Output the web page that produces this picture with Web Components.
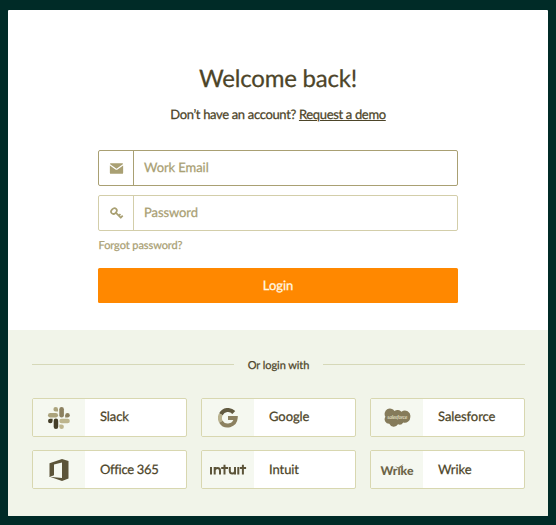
<!DOCTYPE html>
<html lang="en"><head><meta charset="utf-8"><title>Login</title>
<style>
body{margin:0;background:#002b27;font-family:Lato,"Liberation Sans",sans-serif;color:#4d4529;text-rendering:geometricPrecision;letter-spacing:-.08px;-webkit-text-stroke:.25px currentColor}
</style></head><body>
<login-page></login-page>
<script>
const define=(name,html)=>customElements.define(name,class extends HTMLElement{
  constructor(){super();this.attachShadow({mode:'open'}).innerHTML=html;}
});

define('text-field',`<style>
:host{display:flex;box-sizing:border-box;height:36px;border:1px solid var(--line,#d3ceaa);border-radius:2px;background:#fff;color:#a9a073}
.icon{width:34px;border-right:1px solid var(--line,#d3ceaa);display:grid;place-items:center}
.label{padding-left:10px;font-size:13px;line-height:33px}
</style><div class="icon"><slot name="icon"></slot></div><div class="label"><slot></slot></div>`);

define('primary-button',`<style>
:host{display:block;height:35px;line-height:35px;border-radius:1.5px;background:#ff8800;color:#fff8e4;font-size:13px;text-align:center}
</style><slot></slot>`);

define('line-divider',`<style>
:host{display:flex;align-items:center;gap:14px;height:20px;font-size:11px}
i{flex:1;height:1px;background:#d6d8b8;margin-bottom:2px}
</style><i></i><span><slot></slot></span><i></i>`);

define('sso-button',`<style>
:host{display:flex;box-sizing:border-box;height:39px;border:1px solid #d8d7b0;border-radius:2px;background:#fff;overflow:hidden}
.icon{width:52px;background:#f5f8f0;display:grid;place-items:center}
.label{padding-left:15px;font-size:13px;line-height:var(--label-height,35px)}
</style><div class="icon"><slot name="icon"></slot></div><div class="label"><slot></slot></div>`);

define('login-page',`<style>
:host{display:block;padding:10px 8px 9px}
.card{height:506px;border-radius:1px;overflow:hidden;background:#fff;display:flex;flex-direction:column}
.top{height:320px;box-sizing:border-box;padding:50px 90px 0}
h1{margin:0;font-size:24px;line-height:37px;font-weight:400;text-align:center;letter-spacing:-.22px}
.sub{margin:7px 0 26px;text-align:center;font-size:13px;line-height:20px;letter-spacing:-.34px}
.sub a{text-decoration:underline;text-underline-offset:1px;text-decoration-thickness:1px}
.first{--line:#a9a073;margin-bottom:9px}
.forgot{font-size:11px;line-height:16px;padding:7px 0 0 .5px;color:#a9a073;margin-bottom:14px}
.bottom{flex:1;background:#f1f4e9;padding:25px 23px 0 24px}
.grid{display:grid;grid-template-columns:repeat(3,155px);gap:13px 14px;margin-top:23px}
.low{--label-height:37px}
svg{display:block;letter-spacing:0;-webkit-text-stroke:0}
</style>
<div class="card">
<div class="top">
<h1>Welcome back!</h1>
<div class="sub">Don’t have an account? <a>Request a demo</a></div>
<text-field class="first"><svg slot="icon" width="15" height="13" viewBox="0 0 14 12"><path fill="#a9a073" d="M1.700 1h10.600q.9 0 .9.900L7 6.300.8 1.900q0-.9.9-.9zM.8 3.200 6 6.900q1 .7 2 0l5.200-3.700v6.700q0 1.100-1.100 1.100H1.900Q.8 11 .8 9.900z"/></svg>Work Email</text-field>
<text-field><svg slot="icon" width="15" height="15" viewBox="0 0 14 14" fill="none" stroke="#a9a073"><ellipse cx="4.600" cy="4.700" rx="2.900" ry="2.300" stroke-width="1.600" transform="rotate(-45 4.600 4.700)"/><path stroke-width="1.600" d="m6.300 6.200 5.100 5.200M9 9.200l1.700-1.700M10.800 11l2-2"/></svg>Password</text-field>
<div class="forgot">Forgot password?</div>
<primary-button>Login</primary-button>
</div>
<div class="bottom">
<line-divider>Or login with</line-divider>
<div class="grid">
<sso-button><svg slot="icon" width="24" height="24" viewBox="0 0 24 24"><g fill="#aba37c"><rect x="1" y="7" width="10" height="4.500" rx="2.250"/><path d="M11 5.600H8.700A2.300 2.300 0 1 1 11 3.300z"/></g><g fill="#8c8160"><rect x="12.300" y="1" width="4.600" height="10.500" rx="2.250"/></g><path fill="#8c8160" d="M18.200 11.500V9.200a2.300 2.300 0 1 1 2.300 2.300z"/><g fill="#bdb58d"><rect x="12.300" y="12.800" width="10.500" height="4.500" rx="2.250"/><path d="M12.300 18.500h2.300a2.300 2.300 0 1 1-2.300 2.300z"/></g><g fill="#443e28"><rect x="6.700" y="12.500" width="4.500" height="10.500" rx="2.250"/><path d="M5.600 12.700V15a2.300 2.300 0 1 1-2.300-2.300z"/></g></svg>Slack</sso-button>
<sso-button><svg slot="icon" width="20" height="20" viewBox="0 0 20 20" fill="none" stroke-width="4"><path stroke="#625a40" d="M2.900 6.300A8 8 0 0 1 15.800 4.500"/><path stroke="#b9b28e" d="M2.900 6.200a8 8 0 0 0 0 7.600"/><path stroke="#8c8160" d="M2.900 13.700A8 8 0 0 0 17.700 10H10"/></svg>Google</sso-button>
<sso-button><svg slot="icon" width="28" height="20" viewBox="0 0 28 20"><path fill="#857b5a" d="M11.500 3.100A5 5 0 0 1 18.400 3.800 5.500 5.500 0 0 1 27.300 9a5.500 5.500 0 0 1-7.100 5.500 4.200 4.200 0 0 1-5.200 1.800 4.900 4.900 0 0 1-8.700-.6A4.500 4.500 0 0 1 2.400 8.700 4.900 4.900 0 0 1 11.500 3.100z"/><text x="14.300" y="11.300" text-anchor="middle" font-family="Lato,sans-serif" font-size="5.400" font-weight="700" font-style="italic" fill="#ddd8bd" textLength="20">salesforce</text></svg>Salesforce</sso-button>
<sso-button class="low"><svg slot="icon" width="20" height="24" viewBox="0 0 20 24"><path fill="#5c5439" fill-rule="evenodd" d="M.5 5.300 13 1l6.500 2v17.500L13 23 .8 18.700 13 20V4.500L5 6.400v10.800L.5 19z"/></svg><span style="letter-spacing:-.3px">Office 365</span></sso-button>
<sso-button class="low"><svg slot="icon" width="38" height="14" viewBox="0 0 38 14" fill="none" stroke="#5c5439" stroke-width="2"><path d="M2 4v7.500M5.700 11.500V4M5.700 7.500Q6 5 8.500 5t2.500 2.700v3.800M15.500 1.800v9.700M12.200 5h6.800M20.800 4v4q0 2.600 2.600 2.600T26 8V4M26 4v7.500M29.300 4v7.500M33.900 1.800v9.700M30.900 5h6.200"/></svg>Intuit</sso-button>
<sso-button class="low"><svg slot="icon" width="36" height="16" viewBox="0 0 36 16"><text x="1.500" y="13" font-family="Lato,sans-serif" font-size="12" font-weight="900" fill="#6d6548" textLength="33" lengthAdjust="spacingAndGlyphs">Wrıke</text><path fill="#8c8160" d="m16 4.300 3.300 1L24.500 2l-4.200 5.600-1.800-1.400z"/></svg>Wrike</sso-button>
</div></div></div>`);
</script></body></html>
